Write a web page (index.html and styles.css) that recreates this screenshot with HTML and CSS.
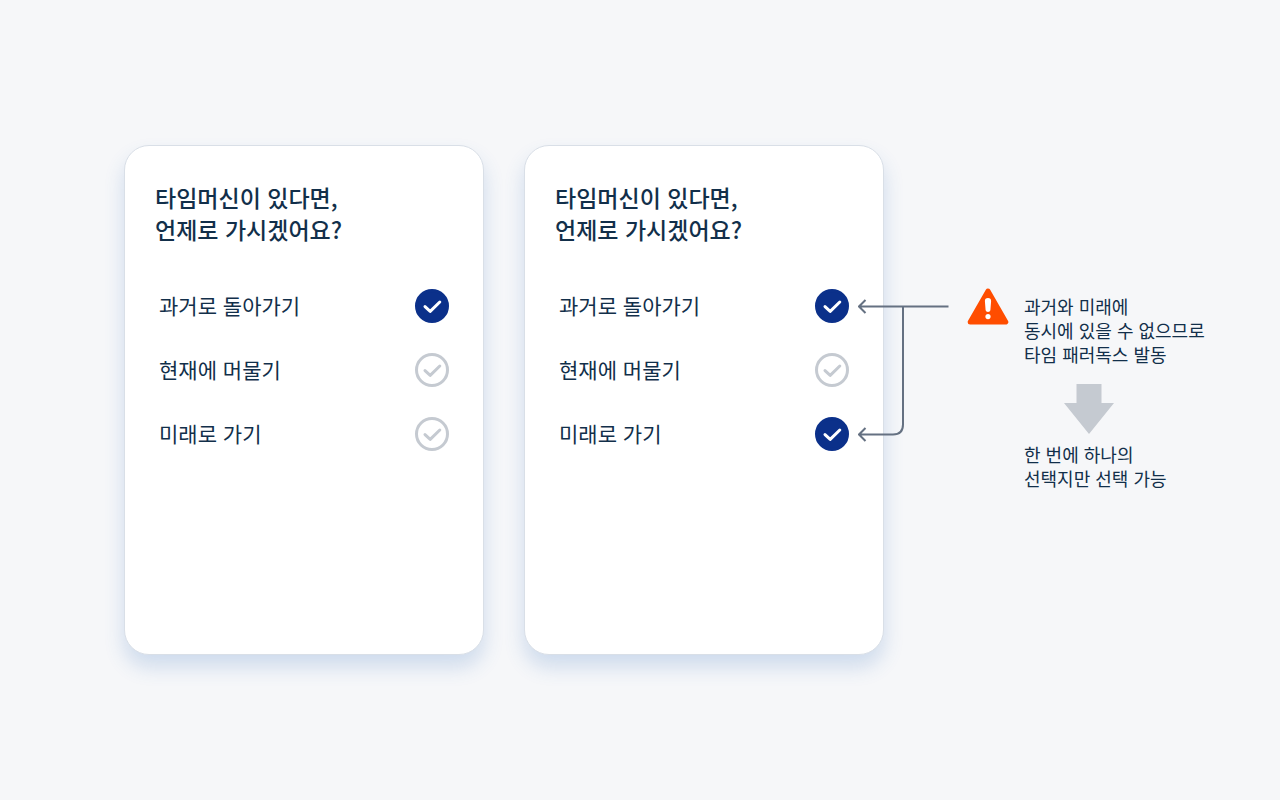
FILE: index.html
```
<!DOCTYPE html>
<html lang="ko">
<head>
    <meta charset="UTF-8" />
    <meta name="viewport" content="width=device-width, initial-scale=1.0" />
    <title>타임머신이 있다면, 언제로 가시겠어요?</title>
    <link rel="stylesheet" href="styles.css">
</head>
<body>
    <!-- shared icon -->
    <svg class="defs" width="0" height="0" aria-hidden="true">
        <symbol id="check" viewBox="0 0 34 34">
            <path d="M10 17.6 L15.2 22.4 L24.8 13" />
        </symbol>
    </svg>

    <main class="stage">
        <form class="card">
            <h2>타임머신이 있다면,<br>언제로 가시겠어요?</h2>
            <div class="options">
                <label class="option">
                    <span class="label">과거로 돌아가기</span>
                    <span class="mark">
                        <input type="radio" name="when" value="past" checked />
                        <svg><use href="#check" /></svg>
                    </span>
                </label>
                <label class="option">
                    <span class="label">현재에 머물기</span>
                    <span class="mark">
                        <input type="radio" name="when" value="present" />
                        <svg><use href="#check" /></svg>
                    </span>
                </label>
                <label class="option">
                    <span class="label">미래로 가기</span>
                    <span class="mark">
                        <input type="radio" name="when" value="future" />
                        <svg><use href="#check" /></svg>
                    </span>
                </label>
            </div>
        </form>

        <form class="card">
            <h2>타임머신이 있다면,<br>언제로 가시겠어요?</h2>
            <div class="options">
                <label class="option">
                    <span class="label">과거로 돌아가기</span>
                    <span class="mark">
                        <input type="checkbox" name="past" checked />
                        <svg><use href="#check" /></svg>
                    </span>
                </label>
                <label class="option">
                    <span class="label">현재에 머물기</span>
                    <span class="mark">
                        <input type="checkbox" name="present" />
                        <svg><use href="#check" /></svg>
                    </span>
                </label>
                <label class="option">
                    <span class="label">미래로 가기</span>
                    <span class="mark">
                        <input type="checkbox" name="future" checked />
                        <svg><use href="#check" /></svg>
                    </span>
                </label>
                <svg class="connector" viewBox="0 0 92 192" aria-hidden="true">
                    <path d="M1 32.5 H90.5 M7.5 26 L1 32.5 L7.5 39" />
                    <path d="M45 32.5 V150.5 Q45 160.5 35 160.5 H1 M7.5 154 L1 160.5 L7.5 167" />
                </svg>
            </div>
        </form>

        <aside class="note">
            <svg class="warning" viewBox="0 0 42 38" role="img" aria-label="경고">
                <path class="triangle" d="M21 3 L38.8 34 H3.2 Z" />
                <path class="bang" d="M21 10 C23.1 10 24.2 11.2 24.1 13.2 L23.4 22 C23.2 24.6 18.8 24.6 18.6 22 L17.9 13.2 C17.8 11.2 18.9 10 21 10 Z" />
                <circle class="bang" cx="21" cy="28.6" r="2.6" />
            </svg>
            <div class="note-text">
                <p>과거와 미래에<br>동시에 있을 수 없으므로<br>타임 패러독스 발동</p>
                <svg class="down" viewBox="0 0 50 50" aria-hidden="true">
                    <path d="M12.5 0 H37.5 V19 H50 L25 50 L0 19 H12.5 Z" />
                </svg>
                <p>한 번에 하나의<br>선택지만 선택 가능</p>
            </div>
        </aside>
    </main>
</body>
</html>
```
FILE: styles.css
```
* {
    box-sizing: border-box;
}
body {
    margin: 0;
    background-color: #f6f7f9;
    color: #122f4a;
    font-family: "Noto Sans CJK KR", sans-serif;
}
.defs {
    position: absolute;
}
.stage {
    min-height: 100vh;
    padding: 40px 40px 40px 124px;
    display: flex;
    align-items: center;
    gap: 40px;
}
.card {
    flex: 0 1 360px;
    min-height: 510px;
    padding: 35px 34px 30px 30px;
    background: white;
    border: 1px solid #d9dfe7;
    border-radius: 25px;
    box-shadow: 0 12px 20px rgba(50, 110, 190, 0.2);
}
h2 {
    margin: 0 0 29px;
    font-size: 23px;
    font-weight: 500;
    line-height: 32px;
}
.options {
    position: relative;
    padding-left: 4px;
}
.option {
    height: 64px;
    display: flex;
    justify-content: space-between;
    align-items: center;
    font-size: 21px;
    line-height: 32px;
    cursor: pointer;
}
.label {
    padding-bottom: 2px;
}
.mark {
    display: grid;
    width: 34px;
    height: 34px;
}
.mark input,
.mark svg {
    grid-area: 1 / 1;
    width: 34px;
    height: 34px;
    margin: 0;
}
.mark input {
    appearance: none;
    border: 3px solid #c5cad1;
    border-radius: 50%;
    cursor: pointer;
}
.mark input:checked {
    background-color: #0b308a;
    border-color: #0b308a;
}
.mark svg {
    fill: none;
    stroke: #c5cad1;
    stroke-width: 3;
    stroke-linecap: round;
    stroke-linejoin: round;
    pointer-events: none;
}
.mark input:checked + svg {
    stroke: white;
}

/* arrows running from the note back to the two conflicting marks */
.connector {
    position: absolute;
    top: 0;
    left: calc(100% + 9px);
    width: 92px;
    height: 192px;
    fill: none;
    stroke: #657182;
    stroke-width: 2;
}

.note {
    min-height: 510px;
    margin-left: 43px;
    padding-top: 143px;
    display: flex;
    align-items: flex-start;
    gap: 15px;
}
.warning {
    flex: none;
    width: 42px;
    height: 38px;
}
.triangle {
    fill: #ff4d00;
    stroke: #ff4d00;
    stroke-width: 5;
    stroke-linejoin: round;
}
.bang {
    fill: white;
}
.note-text {
    padding-top: 6px;
    font-size: 18px;
    line-height: 24px;
}
.note-text p {
    margin: 0;
}
.down {
    display: block;
    width: 50px;
    height: 50px;
    margin: 18px 0 8px 40px;
    fill: #c5cad1;
}
```
